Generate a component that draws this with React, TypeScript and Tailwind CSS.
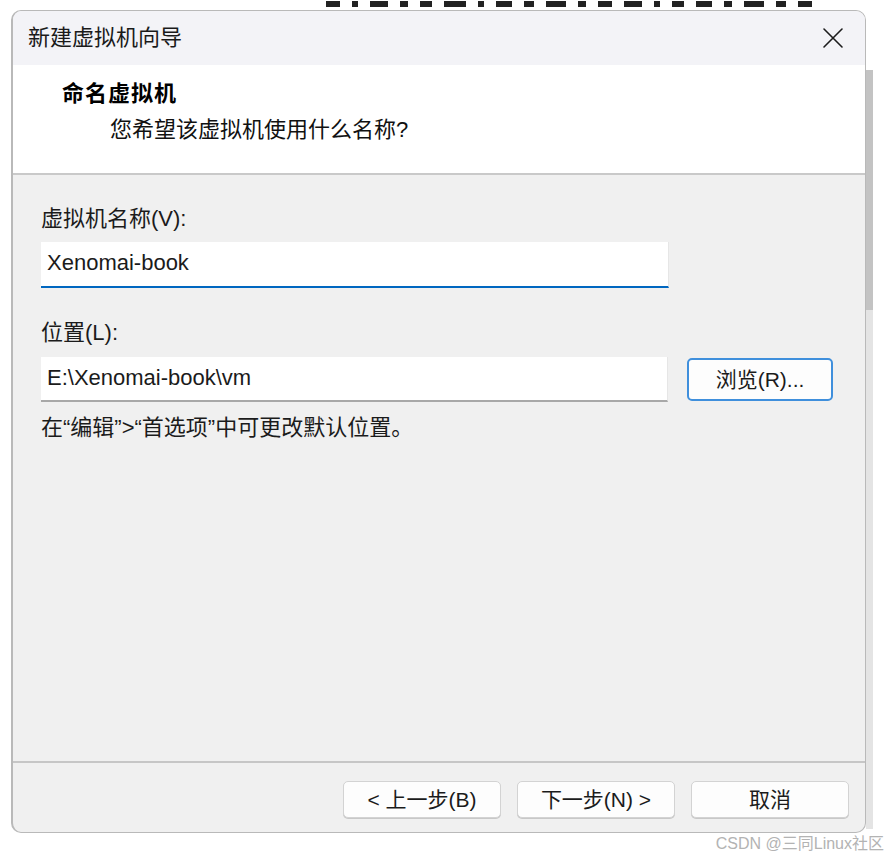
import React from "react";

const font = "font-['Liberation_Sans','Noto_Sans_CJK_SC',sans-serif]";

// widths of the dark strokes left over from the heading of the window behind
const behind = [14, 6, 18, 8, 12, 22, 6, 16, 10, 20, 8, 14, 18, 6, 12, 16, 8, 20, 10, 14];

function CloseIcon() {
  return (
    <svg width="22" height="22" viewBox="0 0 22 22" fill="none">
      <path d="M2 2 L20 20 M20 2 L2 20" stroke="#1c1c1c" strokeWidth="1.6" strokeLinecap="round" />
    </svg>
  );
}

function FooterButton({ children }: { children: React.ReactNode }) {
  return (
    <button
      type="button"
      className="flex h-[37px] w-[158px] items-center justify-center rounded-[5px] border border-[#d3d3d3] bg-[#fdfdfd] text-[21px] text-[#1b1b1b] shadow-[0_1px_0_#c8c8c8]"
    >
      {children}
    </button>
  );
}

export default function App() {
  return (
    <div className={`flex h-[856px] w-[889px] flex-col overflow-hidden bg-white ${font}`}>
      {/* what peeks out of the window behind the dialog */}
      <div className="flex h-[10px] items-start gap-[12px] pl-[326px] pt-[1px]" aria-hidden>
        {behind.map((w, i) => (
          <span key={i} className="h-[6px] bg-[#222]" style={{ width: w }} />
        ))}
      </div>

      <div className="flex pl-[11px]">
        <div className="flex h-[823px] w-[855px] flex-col overflow-hidden rounded-[10px] border border-l-2 border-[#b9b9b9] bg-[#f0f0f0]">
          {/* title bar */}
          <div className="flex h-[54px] shrink-0 items-center justify-between bg-[#f3f3f7] pl-[15px] pr-[21px]">
            <span className="text-[22px] leading-[30px] text-[#1a1a1a]">新建虚拟机向导</span>
            <CloseIcon />
          </div>

          {/* header */}
          <div className="h-[108px] shrink-0 bg-white pl-[49px] pt-[14px]">
            <div className="text-[22px] font-bold leading-[30px] tracking-[1px] text-black">命名虚拟机</div>
            <div className="mt-[6px] pl-[48px] text-[22px] leading-[30px] text-[#111]">
              您希望该虚拟机使用什么名称?
            </div>
          </div>
          <div className="h-[2px] shrink-0 bg-[#c9c9c9]" />

          {/* body */}
          <div className="flex-1 pl-[28px] pt-[29px] text-[#1b1b1b]">
            <div className="text-[22px] leading-[30px]">虚拟机名称(V):</div>
            <div className="mt-[8px] flex h-[46px] w-[628px] items-center border-r border-b-2 border-r-[#e6e6e6] border-b-[#0067c0] bg-white px-[6px] pb-[3px] text-[22px]">
              Xenomai-book
            </div>

            <div className="mt-[30px] text-[22px] leading-[30px]">位置(L):</div>
            <div className="mt-[9px] flex items-center gap-[19px]">
              <div className="flex h-[45px] w-[627px] items-center border-r border-b-2 border-r-[#e6e6e6] border-b-[#a8a8a8] bg-white px-[6px] pb-[3px] text-[22px]">
                E:\Xenomai-book\vm
              </div>
              <button
                type="button"
                className="flex h-[43px] w-[146px] items-center justify-center rounded-[5px] border-2 border-[#3f8fdc] bg-[#fdfdfd] text-[21px] text-[#1b1b1b]"
              >
                浏览(R)...
              </button>
            </div>

            <div className="mt-[11px] text-[22px] leading-[30px]">在“编辑”&gt;“首选项”中可更改默认位置。</div>
          </div>

          {/* footer */}
          <div className="h-[2px] shrink-0 bg-[#c6c6c6]" />
          <div className="flex h-[69px] shrink-0 justify-end gap-[16px] pr-[16px] pt-[18px]">
            <FooterButton>&lt; 上一步(B)</FooterButton>
            <FooterButton>下一步(N) &gt;</FooterButton>
            <FooterButton>取消</FooterButton>
          </div>
        </div>

        {/* scrollbar of the window behind */}
        <div className="flex w-[7px] flex-col pt-[60px] pb-[4px]">
          <div className="h-[240px] bg-[#c3c3c3]" />
          <div className="flex-1 bg-[#e4e4e4]" />
        </div>
      </div>

      <div className="flex justify-end pr-[5px] pt-[1px] text-[16px] leading-[20px] text-[#b3b3b3]">
        CSDN @三同Linux社区
      </div>
    </div>
  );
}
